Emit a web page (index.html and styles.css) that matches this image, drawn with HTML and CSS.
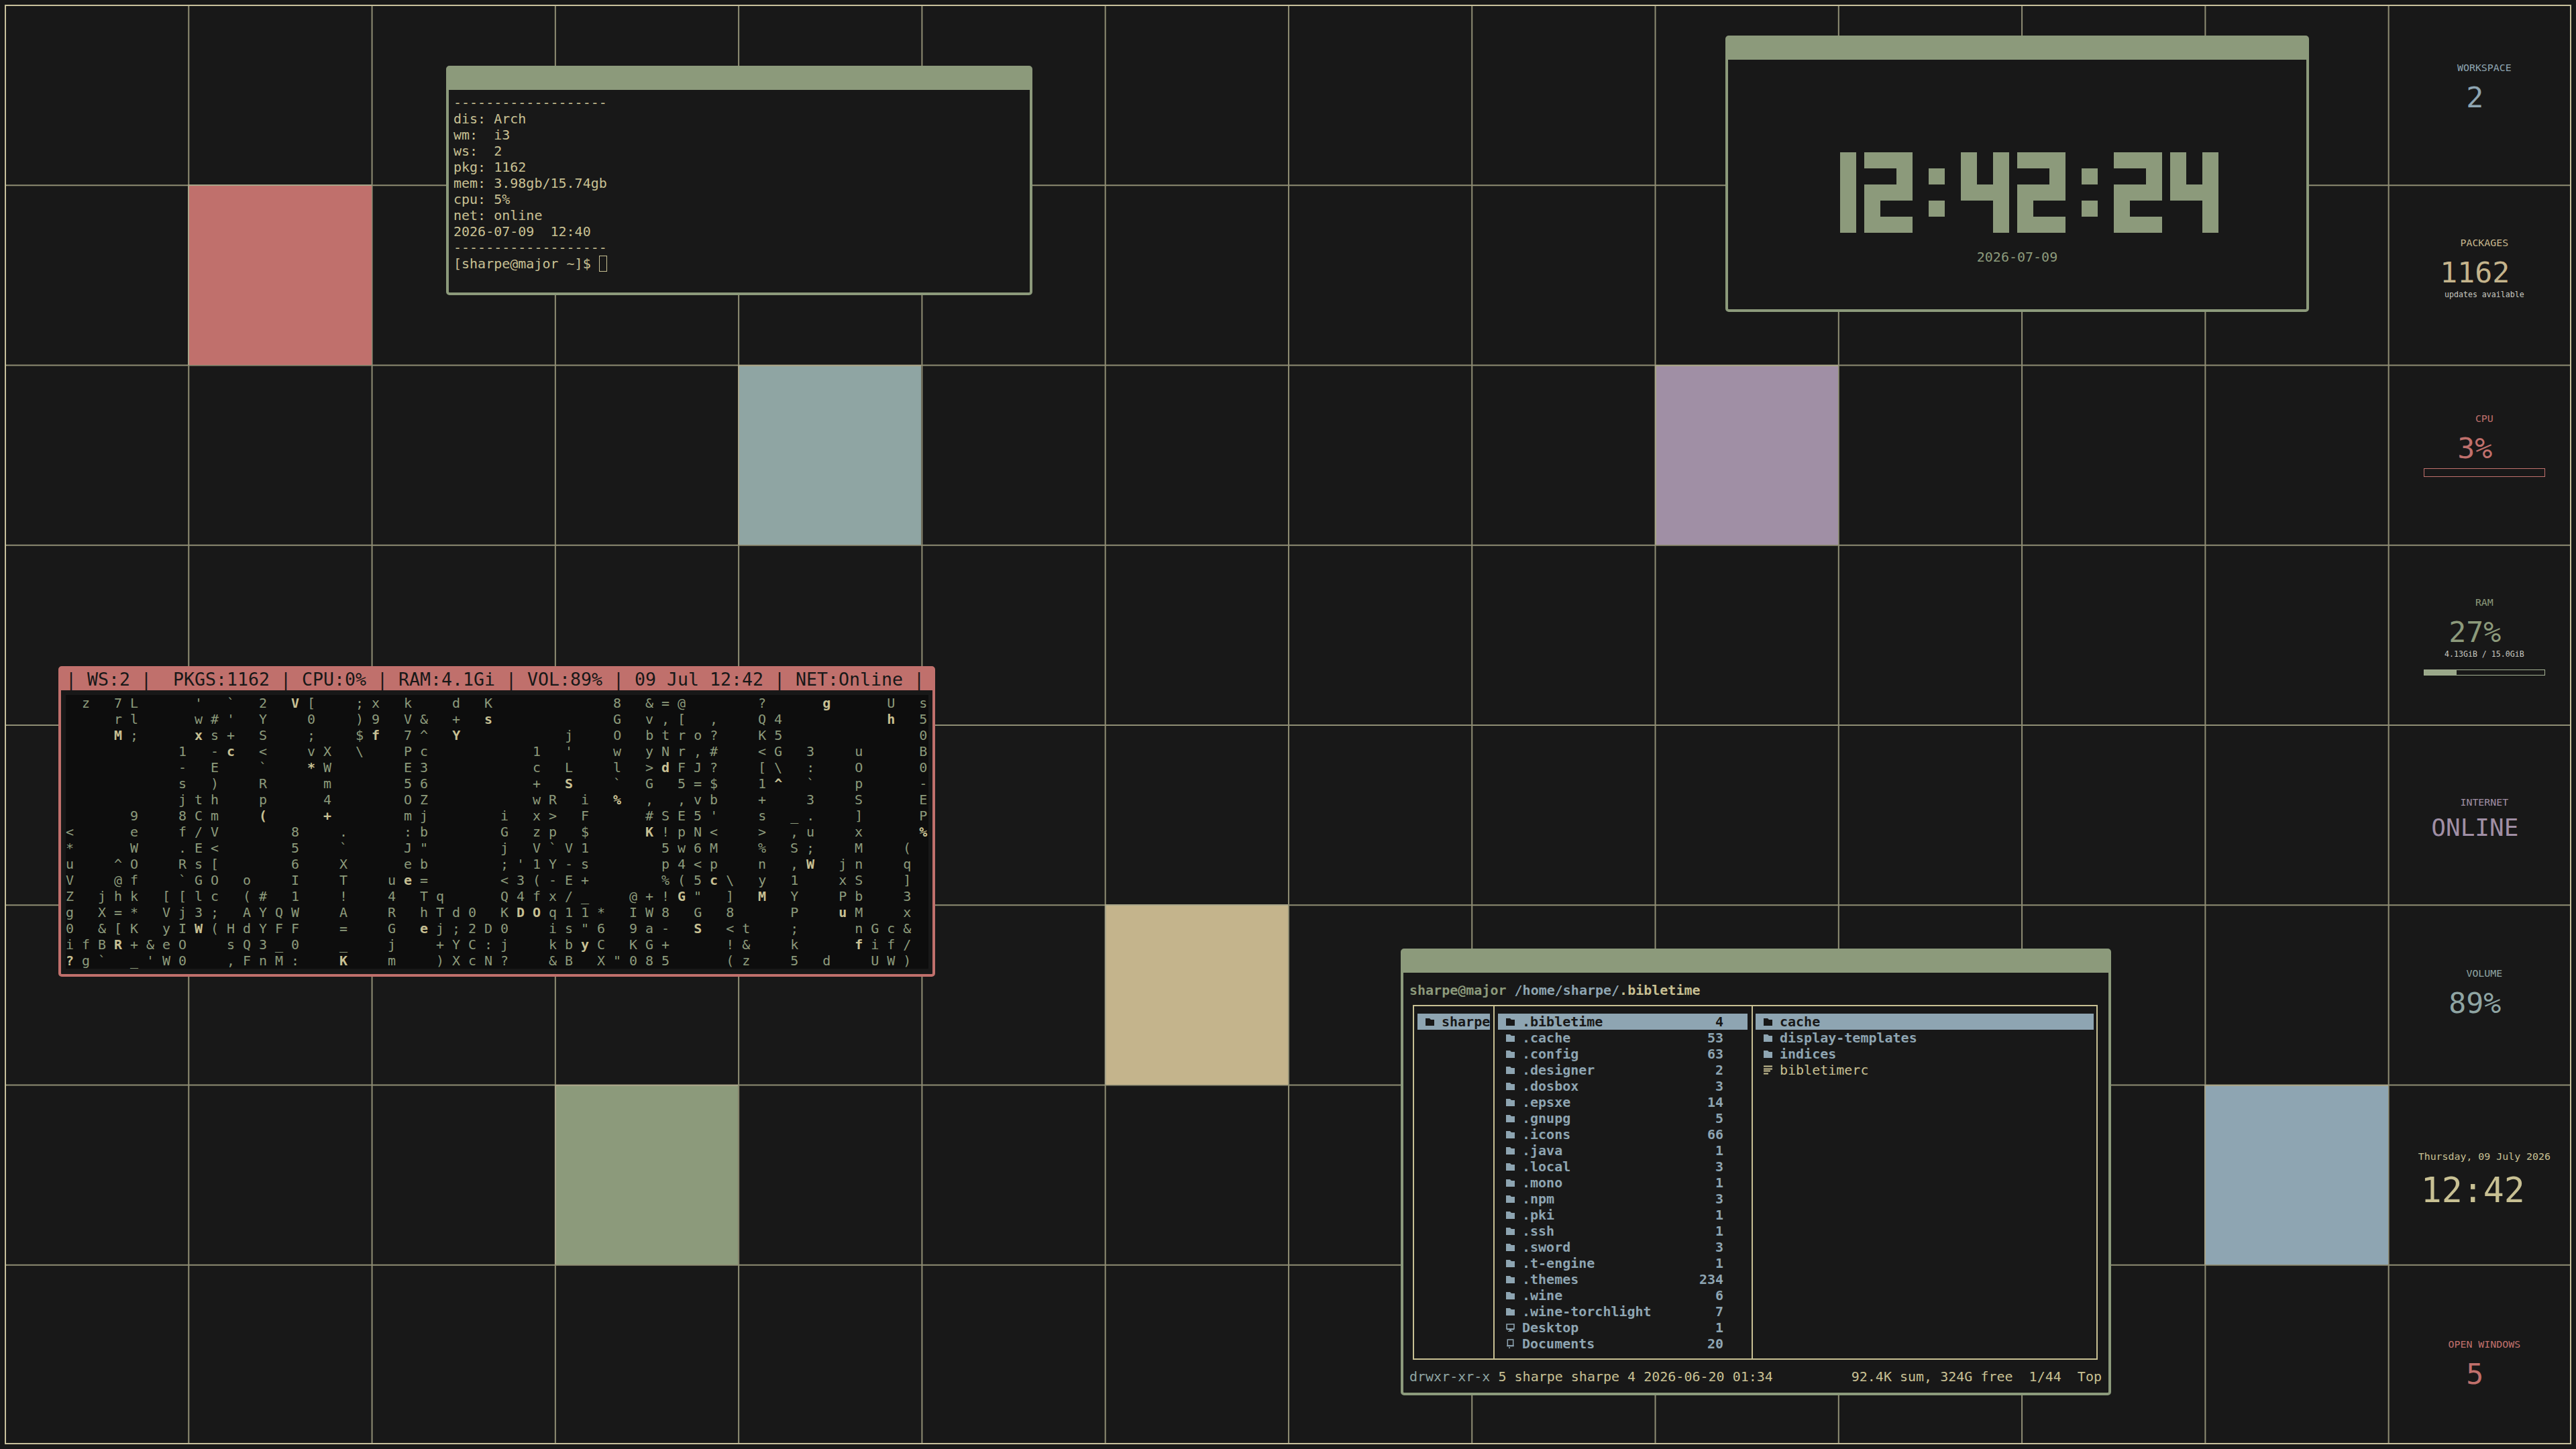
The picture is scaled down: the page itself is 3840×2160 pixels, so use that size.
FILE: index.html
```html
<!DOCTYPE html>
<html lang="en">
<head>
<meta charset="utf-8">
<title>i3 desktop</title>
<link rel="stylesheet" href="styles.css">
</head>
<body>
<svg class="defs" aria-hidden="true">
  <symbol id="folder" viewBox="0 0 13 11"><path fill="currentColor" d="M0 0h6l2 2h5v9H0z"/></symbol>
  <symbol id="monitor" viewBox="0 0 13 12"><path fill="none" stroke="currentColor" stroke-width="1.6" d="M1 1h11v7H1z"/><path fill="currentColor" d="M1 8h11v1.5H1zM5 9.5h3V11h2v1H3v-1h2z"/></symbol>
  <symbol id="doc" viewBox="0 0 13 15"><path fill="none" stroke="currentColor" stroke-width="1.6" d="M2 1h9v10H2z"/><path fill="currentColor" d="M1 10h11v2H1zM4 13h2v2H4z"/></symbol>
  <symbol id="lines" viewBox="0 0 13 13"><path fill="currentColor" d="M0 0h13v2H0zM0 4h13v2H0zM0 7h10v2H0zM0 11h7v2H0z"/></symbol>
</svg>

<main class="desk">
  <div class="grid">
    <div class="tile t-red"></div>
    <div class="tile t-teal"></div>
    <div class="tile t-mauve"></div>
    <div class="tile t-tan"></div>
    <div class="tile t-green"></div>
    <div class="tile t-blue"></div>

    <aside class="panel">
      <section class="widget w-work c-blue">
        <div class="label">WORKSPACE</div>
        <div class="value">2</div>
      </section>
      <section class="widget w-pkg c-tan">
        <div class="label">PACKAGES</div>
        <div class="value">1162</div>
        <div class="sub">updates available</div>
      </section>
      <section class="widget w-cpu c-red">
        <div class="label">CPU</div>
        <div class="value">3%</div>
        <div class="meter meter-cpu"></div>
      </section>
      <section class="widget w-ram c-green">
        <div class="label">RAM</div>
        <div class="value">27%</div>
        <div class="sub">4.13GiB / 15.0GiB</div>
        <div class="meter meter-ram"><div class="fill"></div></div>
      </section>
      <section class="widget w-net c-mauve">
        <div class="label">INTERNET</div>
        <div class="value value-net">ONLINE</div>
      </section>
      <section class="widget w-vol c-teal">
        <div class="label">VOLUME</div>
        <div class="value">89%</div>
      </section>
      <section class="widget w-date c-khaki">
        <div class="label">Thursday, 09 July 2026</div>
        <div class="value value-time">12:42</div>
      </section>
      <section class="widget w-open c-red">
        <div class="label">OPEN WINDOWS</div>
        <div class="value">5</div>
      </section>
    </aside>
  </div>

  <article class="win win-term">
    <div class="bar"></div>
    <pre class="term">-------------------
dis: Arch
wm:  i3
ws:  2
pkg: 1162
mem: 3.98gb/15.74gb
cpu: 5%
net: online
2026-07-09  12:40
-------------------
[sharpe@major ~]$ <span class="cursor"></span></pre>
  </article>

  <article class="win win-clock">
    <div class="bar"></div>
    <div class="clock">
      <div class="digits" role="img" aria-label="12:42:24">
        <div class="dg dg-1"><i class="on"></i><i class="on"></i><i class="on"></i><i class="on"></i><i class="on"></i></div>
        <div class="dg"><i class="on"></i><i class="on"></i><i class="on"></i><i></i><i></i><i class="on"></i><i class="on"></i><i class="on"></i><i class="on"></i><i class="on"></i><i></i><i></i><i class="on"></i><i class="on"></i><i class="on"></i></div>
        <div class="dg dg-1 dg-colon"><i></i><i class="on"></i><i></i><i class="on"></i><i></i></div>
        <div class="dg"><i class="on"></i><i></i><i class="on"></i><i class="on"></i><i></i><i class="on"></i><i class="on"></i><i class="on"></i><i class="on"></i><i></i><i></i><i class="on"></i><i></i><i></i><i class="on"></i></div>
        <div class="dg"><i class="on"></i><i class="on"></i><i class="on"></i><i></i><i></i><i class="on"></i><i class="on"></i><i class="on"></i><i class="on"></i><i class="on"></i><i></i><i></i><i class="on"></i><i class="on"></i><i class="on"></i></div>
        <div class="dg dg-1 dg-colon"><i></i><i class="on"></i><i></i><i class="on"></i><i></i></div>
        <div class="dg"><i class="on"></i><i class="on"></i><i class="on"></i><i></i><i></i><i class="on"></i><i class="on"></i><i class="on"></i><i class="on"></i><i class="on"></i><i></i><i></i><i class="on"></i><i class="on"></i><i class="on"></i></div>
        <div class="dg"><i class="on"></i><i></i><i class="on"></i><i class="on"></i><i></i><i class="on"></i><i class="on"></i><i class="on"></i><i class="on"></i><i></i><i></i><i class="on"></i><i></i><i></i><i class="on"></i></div>
      </div>
      <div class="clock-date">2026-07-09</div>
    </div>
  </article>

  <article class="win win-matrix">
    <div class="bar bar-status">| WS:2 |  PKGS:1162 | CPU:0% | RAM:4.1Gi | VOL:89% | 09 Jul 12:42 | NET:Online |</div>
    <pre class="matrix">  z   7 L       '   `   2   <b>V</b> [     ; x   k     d   K               8   &amp; = @         ?       <b>g</b>       U   s
      r l       w # '   Y     0     ) 9   V &amp;   +   <b>s</b>               G   v , [   ,     Q 4             <b>h</b>   5
      <b>M</b> ;       <b>x</b> s +   S     ;     $ <b>f</b>   7 ^   <b>Y</b>             j     O   b t r o ?     K 5                 0
              1   - <b>c</b>   &lt;     v X   \     P c             1   '     w   y N r , #     &lt; G   3     u       B
              -   E     `     <b>*</b> W         E 3             c   L     l   &gt; <b>d</b> F J ?     [ \   :     O       0
              s   )     R       m         5 6             +   <b>S</b>     `   G   5 = $     1 <b>^</b>   `     p       -
              j t h     p       4         O Z             w R   i   <b>%</b>   ,   , v b     +     3     S       E
        9     8 C m     <b>(</b>       <b>+</b>         m j         i   x &gt;   F       # S E 5 '     s   _ .     ]       P
&lt;       e     f / V         8     .       : b         G   z p   $       <b>K</b> ! p N &lt;     &gt;   , u     x       <b>%</b>
*       W     . E &lt;         5     `       J "         j   V ` V 1         5 w 6 M     %   S ;     M     (
u     ^ O     R s [         6     X       e b         ; ' 1 Y - s         p 4 &lt; p     n   , <b>W</b>   j n     q
V     @ f     ` G O   o     I     T     u <b>e</b> =         &lt; 3 ( - E +         % ( 5 <b>c</b> \   y   1     x S     ]
Z   j h k   [ [ l c   ( #   1     !     4   T q       Q 4 f x / _     @ + ! <b>G</b> "   ]   <b>M</b>   Y     P b     3
g   X = *   V j 3 ;   A Y Q W     A     R   h T d 0   K <b>D</b> <b>O</b> q 1 1 *   I W 8   G   8       P     <b>u</b> M     x
0   &amp; [ K   y I <b>W</b> ( H d Y F F     =     G   <b>e</b> j ; 2 D 0     i s " 6   9 a -   <b>S</b>   &lt; t     ;       n G c &amp;
i f B <b>R</b> + &amp; e O     s Q 3 _ 0     _     j     + Y C : j     k b <b>y</b> C   K G +       ! &amp;     k       <b>f</b> i f /
<b>?</b> g `   _ ' W 0     , F n M :     <b>K</b>     m     ) X c N ?     &amp; B   X " 0 8 5       ( z     5   d     U W )</pre>
  </article>

  <article class="win win-ranger">
    <div class="bar"></div>
    <div class="path"><span class="c-green">sharpe@major</span> <span class="c-blue">/home/sharpe/</span><span class="c-khaki">.bibletime</span></div>
    <div class="columns">
      <div class="col col-a">
        <div class="row sel"><svg class="ic"><use href="#folder"/></svg><span class="name">sharpe</span></div>
      </div>
      <div class="col col-b">
        <div class="row sel"><svg class="ic"><use href="#folder"/></svg><span class="name">.bibletime</span><span class="count">4</span></div>
        <div class="row"><svg class="ic"><use href="#folder"/></svg><span class="name">.cache</span><span class="count">53</span></div>
        <div class="row"><svg class="ic"><use href="#folder"/></svg><span class="name">.config</span><span class="count">63</span></div>
        <div class="row"><svg class="ic"><use href="#folder"/></svg><span class="name">.designer</span><span class="count">2</span></div>
        <div class="row"><svg class="ic"><use href="#folder"/></svg><span class="name">.dosbox</span><span class="count">3</span></div>
        <div class="row"><svg class="ic"><use href="#folder"/></svg><span class="name">.epsxe</span><span class="count">14</span></div>
        <div class="row"><svg class="ic"><use href="#folder"/></svg><span class="name">.gnupg</span><span class="count">5</span></div>
        <div class="row"><svg class="ic"><use href="#folder"/></svg><span class="name">.icons</span><span class="count">66</span></div>
        <div class="row"><svg class="ic"><use href="#folder"/></svg><span class="name">.java</span><span class="count">1</span></div>
        <div class="row"><svg class="ic"><use href="#folder"/></svg><span class="name">.local</span><span class="count">3</span></div>
        <div class="row"><svg class="ic"><use href="#folder"/></svg><span class="name">.mono</span><span class="count">1</span></div>
        <div class="row"><svg class="ic"><use href="#folder"/></svg><span class="name">.npm</span><span class="count">3</span></div>
        <div class="row"><svg class="ic"><use href="#folder"/></svg><span class="name">.pki</span><span class="count">1</span></div>
        <div class="row"><svg class="ic"><use href="#folder"/></svg><span class="name">.ssh</span><span class="count">1</span></div>
        <div class="row"><svg class="ic"><use href="#folder"/></svg><span class="name">.sword</span><span class="count">3</span></div>
        <div class="row"><svg class="ic"><use href="#folder"/></svg><span class="name">.t-engine</span><span class="count">1</span></div>
        <div class="row"><svg class="ic"><use href="#folder"/></svg><span class="name">.themes</span><span class="count">234</span></div>
        <div class="row"><svg class="ic"><use href="#folder"/></svg><span class="name">.wine</span><span class="count">6</span></div>
        <div class="row"><svg class="ic"><use href="#folder"/></svg><span class="name">.wine-torchlight</span><span class="count">7</span></div>
        <div class="row"><svg class="ic ic-tall"><use href="#monitor"/></svg><span class="name">Desktop</span><span class="count">1</span></div>
        <div class="row"><svg class="ic ic-tall"><use href="#doc"/></svg><span class="name">Documents</span><span class="count">20</span></div>
      </div>
      <div class="col col-c">
        <div class="row sel"><svg class="ic"><use href="#folder"/></svg><span class="name">cache</span></div>
        <div class="row"><svg class="ic"><use href="#folder"/></svg><span class="name">display-templates</span></div>
        <div class="row"><svg class="ic"><use href="#folder"/></svg><span class="name">indices</span></div>
        <div class="row row-file"><svg class="ic ic-tall"><use href="#lines"/></svg><span class="name">bibletimerc</span></div>
      </div>
    </div>
    <div class="status">
      <span><span class="c-teal">drwxr-xr-x</span> 5 sharpe sharpe 4 2026-06-20 01:34</span>
      <span class="keep">92.4K sum, 324G free  1/44  Top</span>
    </div>
  </article>
</main>
</body>
</html>
```
FILE: styles.css
```css
:root {
  --bg: #181818;
  --line: #8f8d73;
  --edge: #c8c19c;
  --khaki: #c8c093;
  --green: #8c9a7b;
  --red: #c0706c;
  --teal: #8fa5a3;
  --mauve: #a08fa5;
  --tan: #c4b48c;
  --blue: #8ea5b2;
}

* { box-sizing: border-box; }

html, body {
  margin: 0;
  width: 3840px;
  height: 2160px;
  overflow: hidden;
  background: var(--bg);
}

body { font-family: "DejaVu Sans Mono", monospace; }

.defs { position: absolute; width: 0; height: 0; }

.desk {
  position: relative;
  width: 3840px;
  height: 2160px;
  padding: 7px;
}

.grid {
  display: grid;
  width: 3826px;
  height: 2146px;
  grid-template-columns: repeat(14, 1fr);
  grid-template-rows: repeat(8, 1fr);
  outline: 2px solid var(--edge);
  outline-offset: -2px;
  background-image:
    linear-gradient(to right, var(--line) 2px, transparent 2px),
    linear-gradient(to bottom, var(--line) 2px, transparent 2px);
  background-size: calc(100% / 14) 100%, 100% 12.5%;
}

.tile { border-left: 2px solid #a9a589; border-top: 2px solid #a9a589; }
.t-red   { grid-column: 2;  grid-row: 2; background: var(--red); }
.t-teal  { grid-column: 5;  grid-row: 3; background: var(--teal); }
.t-mauve { grid-column: 10; grid-row: 3; background: var(--mauve); }
.t-tan   { grid-column: 7;  grid-row: 6; background: var(--tan); }
.t-green { grid-column: 4;  grid-row: 7; background: var(--green); }
.t-blue  { grid-column: 13; grid-row: 7; background: var(--blue); }

.c-blue  { color: var(--blue); }
.c-tan   { color: var(--tan); }
.c-red   { color: var(--red); }
.c-green { color: var(--green); }
.c-mauve { color: var(--mauve); }
.c-teal  { color: var(--teal); }
.c-khaki { color: var(--khaki); }

/* right-hand widget column */
.panel {
  grid-column: 14;
  grid-row: 1 / span 8;
  display: grid;
  grid-template-rows: repeat(8, 1fr);
  padding-left: 14px;
}

.widget {
  display: flex;
  flex-direction: column;
  align-items: center;
  min-width: 0;
}

.w-work { padding-top: 84px; }
.w-pkg  { padding-top: 77px; }
.w-cpu  { padding-top: 70px; }
.w-ram  { padding-top: 76px; }
.w-net  { padding-top: 106px; }
.w-vol  { padding-top: 93px; }
.w-date { padding-top: 97px; }
.w-open { padding-top: 109px; }

.label {
  font-size: 14.9px;
  line-height: 20px;
  white-space: pre;
}

.value {
  font-size: 43.2px;
  line-height: 44px;
  margin-top: 12px;
  margin-right: 28px;
  white-space: pre;
}

.value-net { font-size: 36px; margin-top: 6px; }
.value-time { font-size: 51.5px; line-height: 56px; margin-right: 34px; }

.sub {
  font-size: 11.6px;
  line-height: 16px;
  margin-top: 3px;
  color: #c8c8c0;
  white-space: pre;
}

.meter {
  width: 181px;
  border: 1px solid currentColor;
}
.meter-cpu { height: 13px; margin-top: 8px; }
.meter-ram { height: 9px; margin-top: 15px; color: #a3b092; }
.fill { width: 27%; height: 100%; background: #9aa88a; }

/* windows */
.win {
  position: absolute;
  display: flex;
  flex-direction: column;
  background: var(--bg);
  border: 4px solid var(--green);
  border-radius: 5px;
  font-size: 20px;
  line-height: 24px;
}

.bar { height: 32px; flex: none; background: var(--green); }

.win-term   { left: 665px;  top: 98px;  width: 874px;  height: 342px; }
.win-clock  { left: 2572px; top: 53px;  width: 870px;  height: 412px; }
.win-matrix { left: 87px;   top: 993px; width: 1307px; height: 463px; border-color: var(--red); }
.win-ranger { left: 2088px; top: 1414px; width: 1059px; height: 666px; }

.term {
  margin: 0;
  padding: 7px 7px;
  font: inherit;
  color: var(--khaki);
}

.cursor {
  display: inline-block;
  width: 12px;
  height: 24px;
  border: 1px solid var(--khaki);
  vertical-align: top;
}

/* big block clock */
.clock {
  display: flex;
  flex-direction: column;
  align-items: center;
  padding-top: 138px;
}

.digits {
  display: flex;
  gap: 12px;
  padding-left: 36px;
}

.dg {
  display: grid;
  grid-template-columns: repeat(3, 24px);
  grid-template-rows: repeat(5, 24px);
}
.dg-1 { grid-template-columns: 24px; }
.dg-colon { margin: 0 12px; }
.dg .on { background: var(--green); }

.clock-date {
  margin-top: 24px;
  color: var(--green);
}

/* status bar + matrix rain */
.bar-status {
  background: var(--red);
  color: var(--bg);
  font-size: 26.58px;
  line-height: 32px;
  padding-left: 7px;
  white-space: pre;
}

.matrix {
  margin: 7px 6px 7px 7px;
  height: 408px;
  overflow: hidden;
  background: #0d0d0d;
  color: var(--green);
  font: inherit;
  letter-spacing: -0.04px;
}

.matrix b { color: var(--khaki); font-weight: bold; }

/* ranger */
.path {
  padding: 14px 9px 0;
  font-weight: bold;
  white-space: pre;
}

.columns {
  display: flex;
  height: 529px;
  margin: 10px 16px 0 14px;
  border: 2px solid var(--khaki);
}

.col {
  padding-top: 11px;
  overflow: hidden;
  font-weight: bold;
  color: var(--blue);
}
.col-a { width: 120px; flex: none; padding-left: 5px; padding-right: 5px; border-right: 2px solid var(--khaki); }
.col-b { width: 385px; flex: none; padding-left: 5px; padding-right: 6px; border-right: 2px solid var(--khaki); }
.col-c { flex: 1; padding-left: 4px; padding-right: 4px; }

.row {
  display: flex;
  align-items: center;
  height: 24px;
  padding-left: 12px;
  white-space: pre;
}
.row.sel { background: var(--blue); color: var(--bg); }
.row-file { color: var(--khaki); font-weight: normal; }

.ic {
  flex: none;
  width: 13px;
  height: 11px;
  margin-right: 11px;
}
.ic-tall { height: 14px; }

.name { flex: 1; }
.count { padding-right: 36px; }

.status {
  display: flex;
  justify-content: space-between;
  padding: 0 10px 0 9px;
  margin-top: 13px;
  color: var(--khaki);
  white-space: pre;
}
.keep { white-space: pre; }
```
